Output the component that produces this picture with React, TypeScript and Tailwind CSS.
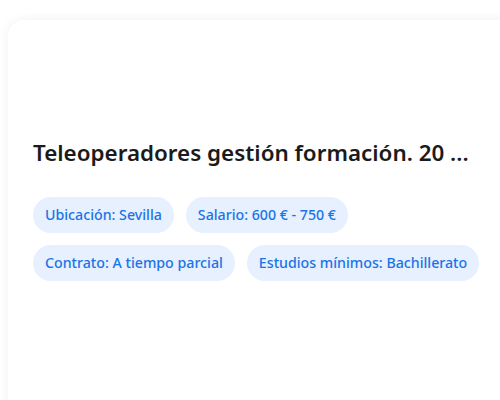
import React from "react";

const chips = [
  ["Ubicación: Sevilla", "Salario: 600 € - 750 €"],
  ["Contrato: A tiempo parcial", "Estudios mínimos: Bachillerato"],
];

export default function App() {
  return (
    <div
      className="w-[500px] h-[400px] overflow-hidden bg-white pl-2 pt-5"
      style={{ fontFamily: '"Noto Sans", "Open Sans", sans-serif' }}
    >
      <div className="w-[540px] h-[420px] rounded-2xl bg-white shadow-[0_0_12px_rgba(0,0,0,0.06)] pl-[25px] pt-[114px]">
        <h1 className="whitespace-nowrap text-[22.4px] leading-[38px] font-semibold text-[#1b1b1b]">
          Teleoperadores gestión formación. 20 ...
        </h1>
        <div className="mt-[25px] flex flex-col gap-3">
          {chips.map((row, i) => (
            <div key={i} className="flex gap-3">
              {row.map((c) => (
                <span
                  key={c}
                  className="h-9 flex items-center rounded-full bg-[#e6f0fe] px-3 text-[14.2px] font-medium text-[#1a73e8]"
                >
                  {c}
                </span>
              ))}
            </div>
          ))}
        </div>
      </div>
    </div>
  );
}
